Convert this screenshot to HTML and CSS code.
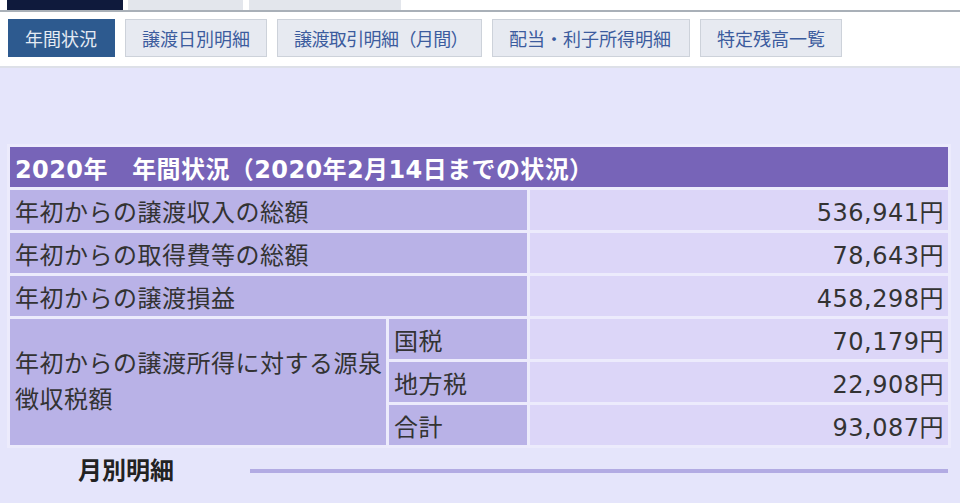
FILE: index.html
```html
<!DOCTYPE html>
<html lang="ja">
<head>
<meta charset="utf-8">
<title>年間状況</title>
<link rel="stylesheet" href="styles.css">
</head>
<body>
<div class="tabs">
  <div class="tab tab-active"></div>
  <div class="tab tab-2"></div>
  <div class="tab tab-3"></div>
</div>
<nav class="subnav">
  <a class="btn btn-active btn-w1">年間状況</a>
  <a class="btn btn-w2">譲渡日別明細</a>
  <a class="btn btn-w3">譲渡取引明細（月間）</a>
  <a class="btn btn-w4">配当・利子所得明細</a>
  <a class="btn btn-w5">特定残高一覧</a>
</nav>
<main class="main">
  <table class="summary">
    <colgroup>
      <col class="col-label">
      <col class="col-sub">
      <col class="col-value">
    </colgroup>
    <tr><th class="head" colspan="3">2020年　年間状況（2020年2月14日までの状況）</th></tr>
    <tr><td class="label" colspan="2">年初からの譲渡収入の総額</td><td class="value">536,941円</td></tr>
    <tr><td class="label" colspan="2">年初からの取得費等の総額</td><td class="value">78,643円</td></tr>
    <tr><td class="label" colspan="2">年初からの譲渡損益</td><td class="value">458,298円</td></tr>
    <tr><td class="label label-tall" rowspan="3">年初からの譲渡所得に対する源泉徴収税額</td><td class="label">国税</td><td class="value">70,179円</td></tr>
    <tr><td class="label">地方税</td><td class="value">22,908円</td></tr>
    <tr><td class="label">合計</td><td class="value">93,087円</td></tr>
  </table>
  <div class="section">
    <h2 class="section-title">月別明細</h2>
    <div class="section-rule"></div>
  </div>
</main>
</body>
</html>
```
FILE: styles.css
```css
html, body {
  margin: 0;
  padding: 0;
  height: 100%;
}
body {
  font-family: "DejaVu Sans", "Noto Sans CJK JP", sans-serif;
  color: #333;
  background: #e5e5fb;
  overflow: hidden;
}
.tabs {
  display: flex;
  height: 10px;
  background: #fff;
  border-bottom: 2px solid #a9b0b8;
}
.tab {
  height: 10px;
}
.tab-active {
  width: 116px;
  margin-left: 7px;
  background: #0f1a3c;
}
.tab-2 {
  width: 115px;
  margin-left: 5px;
  background: #e3e6ec;
}
.tab-3 {
  width: 152px;
  margin-left: 6px;
  background: #e3e6ec;
}
.subnav {
  display: flex;
  gap: 10px;
  padding: 7px 0 9px 8px;
  background: #fff;
  border-bottom: 2px solid #dde0e8;
}
.btn {
  display: flex;
  align-items: center;
  box-sizing: border-box;
  height: 38px;
  padding: 0 0 0 16px;
  border: 1px solid #cdd2da;
  background: #e7eaf1;
  color: #3c5c9e;
  font-size: 18px;
  white-space: nowrap;
  overflow: hidden;
}
.btn-w1 { width: 107px; }
.btn-w2 { width: 142px; }
.btn-w3 { width: 205px; letter-spacing: -0.6px; }
.btn-w4 { width: 198px; }
.btn-w5 { width: 142px; }
.btn-active {
  background: #2d5a8f;
  border-color: #2d5a8f;
  color: #e4eaf3;
}
.main {
  padding: 76px 9px 0 7px;
}
.summary {
  width: 944px;
  table-layout: fixed;
  border-collapse: separate;
  border-spacing: 3px;
  background: #ecebfc;
  font-size: 24px;
  letter-spacing: 0.5px;
}
.col-label { width: 376px; }
.col-sub { width: 138px; }
.col-value { width: 418px; }
.summary td, .summary th {
  height: 40px;
  padding: 0 4px 0 5px;
  white-space: nowrap;
}
.head {
  background: #7764b8;
  color: #fff;
  font-weight: bold;
  text-align: left;
  font-size: 24px;
  letter-spacing: 0.4px;
}
.label {
  background: #b9b2e7;
  text-align: left;
}
.summary .label-tall {
  line-height: 36px;
  vertical-align: middle;
  padding-right: 0;
  white-space: normal;
}
.value {
  background: #dcd6f8;
  text-align: right;
}
.section {
  display: flex;
  align-items: flex-start;
  padding: 3px 0 0 71px;
}
.section-title {
  margin: 0;
  font-size: 24px;
  font-weight: bold;
  color: #222;
  width: 172px;
}
.section-rule {
  flex: 1;
  height: 4px;
  margin-top: 18px;
  background: #b2abe3;
  margin-right: 3px;
}
```
